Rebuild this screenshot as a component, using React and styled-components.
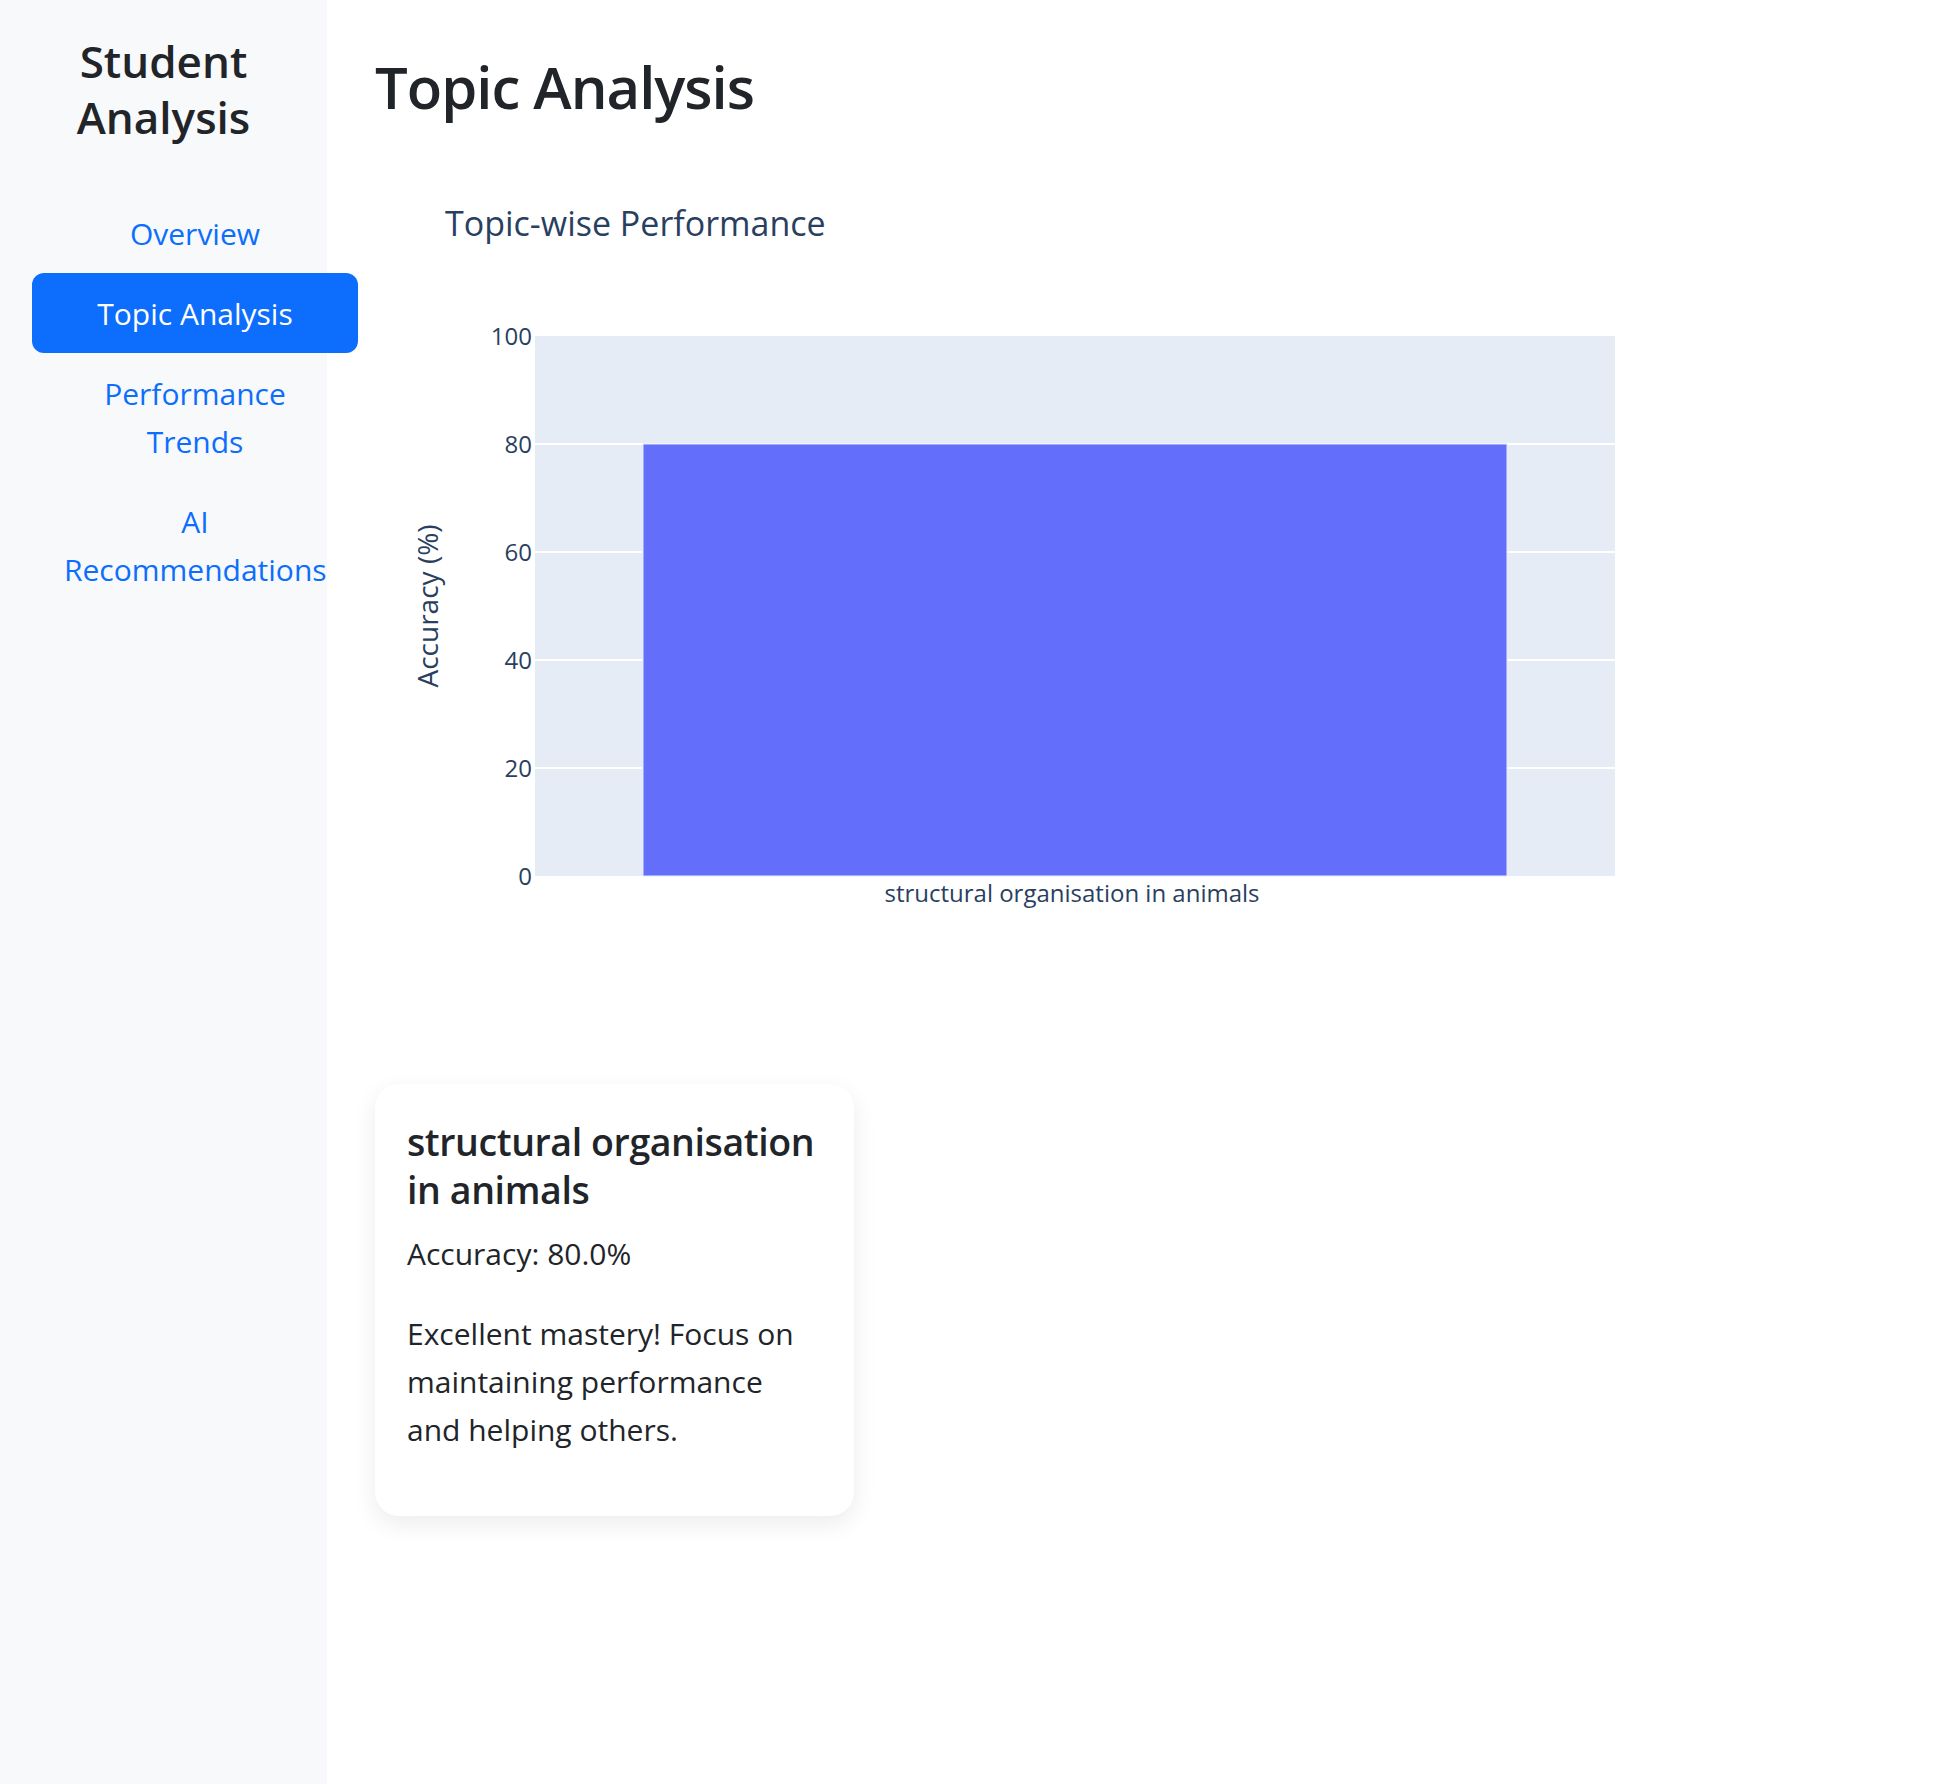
import React from "react";
import styled, { createGlobalStyle } from "styled-components";

const GlobalStyle = createGlobalStyle`
  body {
    margin: 0;
    font-family: "Open Sans", "Noto Sans", sans-serif;
    color: #212529;
    background: #fff;
  }
  * {
    box-sizing: border-box;
  }
`;

const Layout = styled.div`
  display: flex;
  min-height: 100vh;
`;

const Sidebar = styled.aside`
  width: 327px;
  flex-shrink: 0;
  background: #f8f9fa;
  padding: 33px 32px 32px;
`;

const Brand = styled.h4`
  margin: 0 0 48px;
  font-size: 44px;
  font-weight: 600;
  line-height: 56px;
  text-align: center;
`;

const Nav = styled.nav`
  width: 326px;
  display: flex;
  flex-direction: column;
`;

const NavLink = styled.a`
  display: block;
  padding: 17px 32px 15px;
  font-size: 30px;
  line-height: 48px;
  text-align: center;
  text-decoration: none;
  border-radius: 12px;
  color: ${({ $active }) => ($active ? "#fff" : "#0d6efd")};
  background: ${({ $active }) => ($active ? "#0d6efd" : "transparent")};
  cursor: pointer;
`;

const Main = styled.main`
  flex: 1;
  padding: 48px;
`;

const PageTitle = styled.h1`
  margin: 0 0 10px;
  font-size: 58px;
  font-weight: 600;
  line-height: 78px;
  letter-spacing: -1px;
`;

const ChartBox = styled.div`
  width: 1400px;
  height: 900px;
`;

const Card = styled.div`
  width: 479px;
  margin-top: 48px;
  padding: 34px 32px 30px;
  background: #fff;
  border-radius: 24px;
  box-shadow: 0 8px 24px rgba(0, 0, 0, 0.08);
`;

const CardTitle = styled.h5`
  margin: 0 0 16px;
  font-size: 37.5px;
  font-weight: 600;
  line-height: 48px;
  letter-spacing: -0.4px;
`;

const CardText = styled.p`
  margin: 0 0 32px;
  font-size: 30px;
  line-height: 48px;
`;

const navItems = [
  "Overview",
  "Topic Analysis",
  "Performance Trends",
  "AI Recommendations",
];

const topics = [
  {
    name: "structural organisation in animals",
    accuracy: 80,
    note: "Excellent mastery! Focus on maintaining performance and helping others.",
  },
];

// plot area in chart coordinates
const PLOT = { x: 160, y: 200, w: 1080, h: 540 };
const yPos = (v) => PLOT.y + PLOT.h * (1 - v / 100);

const TopicChart = ({ data }) => {
  const band = PLOT.w / data.length;
  return (
    <ChartBox>
      <svg width="1400" height="900" viewBox="0 0 1400 900">
        <g fontFamily='"Open Sans", verdana, arial, sans-serif' fill="#2a3f5f">
          <text x="70" y="100" fontSize="34">
            Topic-wise Performance
          </text>
          <rect x={PLOT.x} y={PLOT.y} width={PLOT.w} height={PLOT.h} fill="#E5ECF6" />
          {[20, 40, 60, 80].map((v) => (
            <line
              key={v}
              x1={PLOT.x}
              x2={PLOT.x + PLOT.w}
              y1={yPos(v)}
              y2={yPos(v)}
              stroke="#fff"
              strokeWidth="2"
            />
          ))}
          {data.map((d, i) => (
            <rect
              key={d.name}
              x={PLOT.x + band * i + band * 0.1}
              y={yPos(d.accuracy)}
              width={band * 0.8}
              height={PLOT.y + PLOT.h - yPos(d.accuracy)}
              fill="#636efa"
              stroke="#E5ECF6"
              strokeWidth="1"
            />
          ))}
          {[0, 20, 40, 60, 80, 100].map((v) => (
            <text key={v} x="157" y={yPos(v) + 8.5} fontSize="24" textAnchor="end">
              {v}
            </text>
          ))}
          {data.map((d, i) => (
            <text
              key={d.name}
              x={PLOT.x + band * i + band / 2 - 3}
              y="766"
              fontSize="24"
              textAnchor="middle"
            >
              {d.name}
            </text>
          ))}
          <text
            x="63"
            y={PLOT.y + PLOT.h / 2}
            fontSize="28"
            textAnchor="middle"
            transform={`rotate(-90 63 ${PLOT.y + PLOT.h / 2})`}
          >
            Accuracy (%)
          </text>
        </g>
      </svg>
    </ChartBox>
  );
};

const App = () => {
  return (
    <>
      <GlobalStyle />
      <Layout>
        <Sidebar>
          <Brand>Student Analysis</Brand>
          <Nav>
            {navItems.map((item) => (
              <NavLink key={item} $active={item === "Topic Analysis"}>
                {item}
              </NavLink>
            ))}
          </Nav>
        </Sidebar>
        <Main>
          <PageTitle>Topic Analysis</PageTitle>
          <TopicChart data={topics} />
          {topics.map((t) => (
            <Card key={t.name}>
              <CardTitle>{t.name}</CardTitle>
              <CardText>Accuracy: {t.accuracy.toFixed(1)}%</CardText>
              <CardText>{t.note}</CardText>
            </Card>
          ))}
        </Main>
      </Layout>
    </>
  );
};

export default App;
